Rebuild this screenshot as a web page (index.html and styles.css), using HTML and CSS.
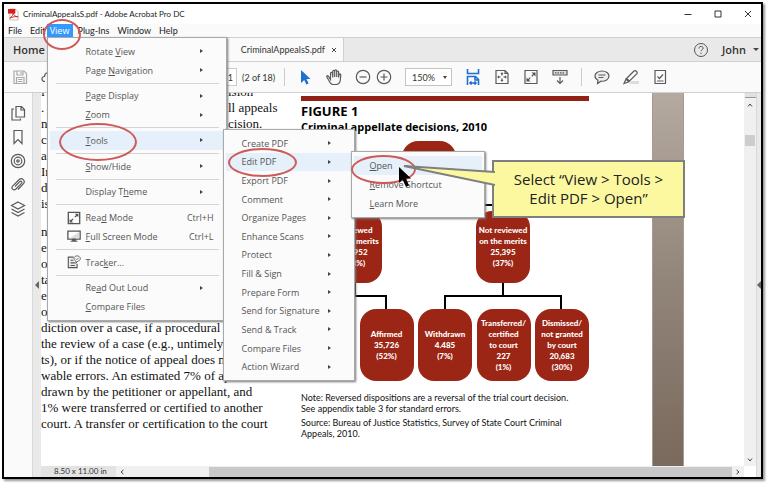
FILE: index.html
```html
<!DOCTYPE html>
<html lang="en">
<head>
  <meta charset="UTF-8">
  <meta name="viewport" content="width=device-width, initial-scale=1.0">
  <title>CriminalAppealsS.pdf - Adobe Acrobat Pro DC</title>
  <link rel="stylesheet" href="styles.css">
</head>
<body>

  <div class="app">

    <header class="title-bar">
      <svg class="app-icon" viewBox="0 0 12 14"><path d="M2 1h6l3 3v9H2z" fill="#fff" stroke="#bbb"/><path d="M0 1h8v5H0z" fill="#d8201a"/><path d="M2 11c2-1 4-4 3.500-6.500C6 8 8 9.500 11 9.500 8 9 5 9.500 2 11z" fill="none" stroke="#d8201a"/></svg>
      <span class="app-title">CriminalAppealsS.pdf - Adobe Acrobat Pro DC</span>
      <div class="window-buttons">
        <button aria-label="Minimize"><svg viewBox="0 0 8 8"><path d="M0.500 4.500h7"/></svg></button>
        <button aria-label="Maximize"><svg viewBox="0 0 8 8"><path d="M1 1h6v6H1z"/></svg></button>
        <button aria-label="Close"><svg viewBox="0 0 8 8"><path d="M1 1l6 6M7 1L1 7"/></svg></button>
      </div>
    </header>

    <nav class="menu-bar">
      <button>File</button>
      <button>Edit</button>
      <div class="menu-item open ring ring-view">
        <button>View</button>

        <!-- View menu -->
        <ul class="menu menu-view">
          <li class="row arrow"><button>Rotate <u>V</u>iew</button></li>
          <li class="row arrow"><button>Page <u>N</u>avigation</button></li>
          <li class="line"></li>
          <li class="row arrow"><button><u>P</u>age Display</button></li>
          <li class="row arrow"><button><u>Z</u>oom</button></li>
          <li class="line"></li>
          <li class="row arrow active ring ring-tools"><button><u>T</u>ools</button>

            <!-- Tools submenu -->
            <ul class="menu menu-tools">
              <li class="row arrow"><button>Create PDF</button></li>
              <li class="row arrow active ring ring-edit"><button>Edit PDF</button>

                <!-- Edit PDF submenu -->
                <ul class="menu menu-edit">
                  <li class="row active ring ring-open"><button><u>O</u>pen</button></li>
                  <li class="row"><button><u>R</u>emove Shortcut</button></li>
                  <li class="row"><button><u>L</u>earn More</button></li>
                </ul>
              </li>
              <li class="row arrow"><button>Export PDF</button></li>
              <li class="row arrow"><button>Comment</button></li>
              <li class="row arrow"><button>Organize Pages</button></li>
              <li class="row arrow"><button>Enhance Scans</button></li>
              <li class="row arrow"><button>Protect</button></li>
              <li class="row arrow"><button>Fill &amp; Sign</button></li>
              <li class="row arrow"><button>Prepare Form</button></li>
              <li class="row arrow"><button>Send for Signature</button></li>
              <li class="row arrow"><button>Send &amp; Track</button></li>
              <li class="row arrow"><button>Compare Files</button></li>
              <li class="row arrow"><button>Action Wizard</button></li>
            </ul>
          </li>
          <li class="line"></li>
          <li class="row arrow"><button><u>S</u>how/Hide</button></li>
          <li class="line"></li>
          <li class="row arrow"><button>Display T<u>h</u>eme</button></li>
          <li class="line"></li>
          <li class="row">
            <svg class="row-icon" viewBox="0 0 16 16"><path d="M1.500 1.500h13v13h-13z" fill="none" stroke="#555" stroke-width="1.500"/><path d="M9 3h4v4zM3 9v4h4z" fill="#555"/><path d="M11.500 4.500L9 7M4.500 11.500L7 9" stroke="#555" stroke-width="1.500"/></svg>
            <button>Rea<u>d</u> Mode <kbd>Ctrl+H</kbd></button>
          </li>
          <li class="row">
            <svg class="row-icon" viewBox="0 0 16 16"><path d="M1 2.500h14v9H1z" fill="#fff" stroke="#555" stroke-width="1.500"/><path d="M14 3.500v7H3z" fill="#ddd"/><path d="M6 11.500h4v2H6zM4 14h8" fill="#555" stroke="#555"/></svg>
            <button><u>F</u>ull Screen Mode <kbd>Ctrl+L</kbd></button>
          </li>
          <li class="line"></li>
          <li class="row">
            <svg class="row-icon" viewBox="0 0 16 16"><path d="M7.500 2.500H1.500v12h10V10" fill="#eee" stroke="#555" stroke-width="1.300"/><path d="M4 6h3M4 9h5M4 12h5" stroke="#555" stroke-width="1.300"/><path d="M11.500 1C9.500 1 8 2.300 8 4s1.200 2.600 2.500 3L10 9.500 12.300 7C14 6.800 15.300 5.500 15.300 4S13.500 1 11.500 1z" fill="#fff" stroke="#555"/><path d="M10 4l1.300 1.300L13.500 3" fill="none" stroke="#555"/></svg>
            <button>Trac<u>k</u>er...</button>
          </li>
          <li class="line"></li>
          <li class="row arrow"><button>Re<u>a</u>d Out Loud</button></li>
          <li class="row"><button><u>C</u>ompare Files</button></li>
        </ul>
      </div>
      <button>Plug-Ins</button>
      <button>Window</button>
      <button>Help</button>
    </nav>

    <div class="tab-bar">
      <button class="tab-home">Home</button>
      <div class="tab-file">
        <span>CriminalAppealsS.pdf</span>
        <button aria-label="Close tab"><svg viewBox="0 0 6 6"><path d="M1 1l4 4M5 1L1 5"/></svg></button>
      </div>
      <div class="account">
        <svg class="help" viewBox="0 0 16 16"><circle cx="8" cy="8" r="6.500"/><path d="M6 6.500c0-3 4.200-2.600 4.200-.3C10.200 7.600 8 7.600 8 9.300M8 10.700v1.300"/></svg>
        <button>John</button>
      </div>
    </div>

    <div class="toolbar">
      <svg class="icon faded" viewBox="0 0 16 16"><path d="M2 2h10l2.500 2.500V14.500H2z"/><path d="M5 2v4h6V2M4.500 14.500v-6h7.500v6M6 10.500h4.500M6 12.500h4.500M9 3v2"/></svg>
      <svg class="icon cloud" viewBox="0 0 16 16"><path d="M4 12.500C0 12.500 0 7.500 3.500 7.500 3.500 3.500 9 2 11 6"/></svg>
      <label class="pages"><input type="text" value="1" aria-label="Page"> (2 of 18)</label>
      <span class="divider"></span>
      <svg class="icon" viewBox="0 0 16 16"><path d="M4 1v13l3.200-3 2.200 4.500 2.200-1L9.500 10H13.500z" fill="#1f6fd0" stroke="none"/></svg>
      <svg class="icon" viewBox="0 0 16 16"><path d="M4.500 10.500L2.500 7.500C1.500 6 .2 7 1 8.300l3 5.200c.6 1.200 1.500 2 3.500 2h2c3 0 4.500-1.500 4.800-4.500l.5-5c0-1.400-1.700-1.400-1.800 0L12.600 8.500V3c0-1.300-1.900-1.300-1.900 0v5V2c0-1.400-2-1.400-2 0v6V2.500c0-1.400-1.900-1.400-1.900 0v6L6.400 4.200c-.1-1.300-1.900-1.200-1.900.2z"/></svg>
      <span class="zoom-pair">
        <svg class="icon" viewBox="0 0 16 16"><circle cx="8" cy="8" r="6.700"/><path d="M4.500 8h7"/></svg>
        <svg class="icon" viewBox="0 0 16 16"><circle cx="8" cy="8" r="6.700"/><path d="M4.500 8h7M8 4.500v7"/></svg>
      </span>
      <span class="zoom-box">
        <select aria-label="Zoom level"><option>150%</option></select>
      </span>
      <svg class="icon blue" viewBox="0 0 16 16"><path d="M2.500 0v4.500h11V0M2.500 16V7.500h8l3 3V16M10 7.500V11h3.500M5 14h6M6.500 12.500L5 14l1.500 1.500M9.500 12.500L11 14l-1.500 1.500"/></svg>
      <svg class="icon" viewBox="0 0 16 16"><path d="M2 1.500h9l3 3v10H2zM11 1.500v3h3"/><path d="M8 4v2.500M8 9.500V12M4 8h2.500M9.500 8H12M7 5l1-1 1 1M7 11l1 1 1-1M5 7L4 8l1 1M11 7l1 1-1 1"/></svg>
      <svg class="icon" viewBox="0 0 16 16"><path d="M2 1.500h12v13H2z"/><path d="M8.500 3.500h4v4zM3.500 8.500v4h4z" fill="#555" stroke="none"/><path d="M11 5L8.700 7.300M5 11l2.300-2.300"/></svg>
      <svg class="icon" viewBox="0 0 16 16"><path d="M1 1.500h14v4.500H1z" fill="#ddd"/><path d="M3 3.800h10" stroke-dasharray="1.500 1"/><path d="M8 8v6.500M5 11.500l3 3 3-3"/></svg>
      <span class="divider"></span>
      <svg class="icon" viewBox="0 0 16 16"><path d="M8 2C4 2 1 4.200 1 7c0 1.800 1.200 3.300 3 4.200L3.500 14.500 7 12.200c4.500.3 8-2 8-5.200C15 4.200 12 2 8 2z" fill="#eee"/><path d="M4.500 6h7M4.500 8.500h5"/></svg>
      <svg class="icon" viewBox="0 0 16 16"><path d="M8 12h8v3H6z" fill="#ddd" stroke="none"/><path d="M1 14.500l2-4.500 2.800 2.800zM3.500 9.500L11 2c1.200-1.300 4.200 1 2.700 2.800L6.500 12z"/></svg>
      <svg class="icon" viewBox="0 0 16 16"><path d="M3 1.500h10.500v13H3z"/><path d="M5.500 7.500l2 2L11 5.500M5 12h6.500"/></svg>
    </div>

    <div class="workspace">
      <aside class="rail">
        <svg class="icon" viewBox="0 0 16 16"><path d="M6 4V1.500h5.500L14.500 4.500V12H6V4M11 1.500V5h3.500"/><path d="M4 4H2v11h8.500v-1.500"/></svg>
        <svg class="icon" viewBox="0 0 16 16"><path d="M4 1.500h8v13l-4-4-4 4z"/></svg>
        <svg class="icon" viewBox="0 0 16 16"><circle cx="8" cy="8" r="6.700"/><circle cx="8" cy="8" r="3.800"/><circle cx="8" cy="8" r="1.200"/></svg>
        <svg class="icon" viewBox="0 0 16 16"><path d="M5 9.500L9.800 4.700c1.300-1.200 3 .4 1.700 1.700L6 12c-2.500 2.200-5.500-.8-3.200-3.200L9 2.700c3-2.700 7 1 4.300 4.200L8 12.500"/></svg>
        <svg class="icon" viewBox="0 0 16 16"><path d="M8 1l6.500 3.500L8 8 1.500 4.500zM1.500 8L8 11.500 14.500 8M1.500 11.500L8 15l6.500-3.500"/></svg>
      </aside>
      <div class="gutter gutter-left"></div>

      <main class="viewer">
        <div class="page">
          <article class="body-text">
            <p>
              <span class="split"><span>f</span><span>ision</span></span>
              <span class="split"><span>.</span><span>ll appeals</span></span>
              <span class="split"><span>n</span><span>cision.</span></span>
              <span>c</span>
              <span>a</span>
              <span>In</span>
              <span>d,</span>
              <span>is</span>
            </p>
            <p>
              <span>n</span>
              <span>er</span>
              <span>or</span>
              <span>ta</span>
              <span>e</span>
              <span>of</span>
              <span>diction over a case, if a procedural</span>
              <span>the review of a case (e.g., untimely</span>
              <span>ts), or if the notice of appeal does n</span>
              <span>wable errors. An estimated 7% of ap</span>
              <span>drawn by the petitioner or appellant, and</span>
              <span>1% were transferred or certified to another</span>
              <span>court. A transfer or certification to the court</span>
            </p>
          </article>

          <section class="figure">
            <h2>FIGURE 1</h2>
            <h3>Criminal appellate decisions, 2010</h3>

            <div class="chart">
              <div class="level level-top"><div class="node node-top"></div></div>
              <svg class="links" viewBox="0 0 288 24"><path d="M128 0v18M54 24v-6h148v6"/></svg>
              <div class="level level-mid">
                <div class="node">Reviewed<br>on the merits<br>43,952<br>(63%)</div>
                <div class="node">Not reviewed<br>on the merits<br>25,395<br>(37%)</div>
              </div>
              <svg class="links" viewBox="0 0 288 26"><path d="M54 0v13M27 26V13h58v13M202 0v13M144 26V13h116v13"/></svg>
              <div class="level">
                <div class="node"></div>
                <div class="node">Affirmed<br>35,726<br>(52%)</div>
                <div class="node">Withdrawn<br>4.485<br>(7%)</div>
                <div class="node">Transferred/<br>certified<br>to court<br>227<br>(1%)</div>
                <div class="node">Dismissed/<br>not granted<br>by court<br>20,683<br>(30%)</div>
              </div>
            </div>

            <p>Note: Reversed dispositions are a reversal of the trial court decision.<br>See appendix table 3 for standard errors.</p>
            <p>Source: Bureau of Justice Statistics, Survey of State Court Criminal<br>Appeals, 2010.</p>
          </section>

          <div class="page-edge"></div>
        </div>

        <div class="scroll-v">
          <span class="scroll-split"></span>
          <svg viewBox="0 0 6 6"><path d="M1 4.500l2-2.500 2 2.500"/></svg>
          <span class="thumb"></span>
          <svg class="last" viewBox="0 0 6 6"><path d="M1 1.500L3 4l2-2.500"/></svg>
        </div>

        <footer class="status">
          <span class="page-size">8.50 x 11.00 in</span>
          <svg viewBox="0 0 6 6"><path d="M4.500 1L2 3l2.500 2"/></svg>
          <span class="thumb"></span>
          <svg viewBox="0 0 6 6"><path d="M1.500 1L4 3 1.500 5"/></svg>
        </footer>
      </main>

      <div class="gutter gutter-right"></div>
    </div>

    <div class="callout">
      <svg class="callout-tip" viewBox="0 0 92 22"><path d="M92 7L1 1l91 19" fill="#fbf8a0" stroke="#7f7f7f" stroke-width="2"/></svg>
      <svg class="cursor" viewBox="0 0 12 20"><path d="M0 0v16l3.500-3.500L7 20l3-1.500L7 11.500h5z"/></svg>
      Select “View &gt; Tools &gt;<br>Edit PDF &gt; Open”
    </div>

  </div>

</body>
</html>
```
FILE: styles.css
```css
* {
  box-sizing: border-box;
}

body {
  margin: 0;
  padding: 2px 5px 4px 2px;
  height: 100vh;
  background: #fff;
  font-family: "Open Sans", "Noto Sans", sans-serif;
  font-size: 9px;
  color: #333;
}

button {
  padding: 0;
  border: 0;
  background: none;
  font: inherit;
  color: inherit;
  text-align: left;
}

ul {
  margin: 0;
  padding: 0;
  list-style: none;
}

.app {
  position: relative;
  display: flex;
  flex-direction: column;
  height: 100%;
  border: 2px solid #000;
  background: #fafafa;
  box-shadow: 2px 2px 2px #999;
}

/* title bar */
.title-bar {
  display: flex;
  align-items: center;
  height: 20px;
  padding: 0 9px 0 4px;
  background: #fff;
}

.app-icon {
  width: 11px;
  height: 13px;
  margin-right: 4px;
}

.app-title,
.menu-bar > button {
  font-family: Lato, sans-serif;
  color: #222;
}

.app-title {
  font-size: 8px;
}

.window-buttons {
  display: flex;
  gap: 22px;
  margin-left: auto;
}

.window-buttons svg {
  display: block;
  width: 8px;
  height: 8px;
  fill: none;
  stroke: #333;
}

/* menus */
.menu-bar {
  display: flex;
  height: 13px;
  padding-left: 4px;
}

.menu-bar > button {
  margin-right: 8px;
  line-height: 13px;
}

.menu-bar > button:nth-of-type(2) {
  margin-right: 1px;
}

.menu-item {
  position: relative;
  width: 26px;
  margin-right: 5px;
}

.menu-item > button {
  width: 26px;
  line-height: 13px;
  text-align: center;
  background: #3399ff;
  color: #fff;
}

.menu {
  position: absolute;
  z-index: 5;
  display: flex;
  flex-direction: column;
  padding: 4px 2px;
  border: 1px solid #a9a9a9;
  background: #fbfbfb;
  box-shadow: 1px 1px 2px #777;
  color: #555;
}

.menu-view {
  top: 13px;
  left: 0;
  width: 180px;
  height: 284px;
}

.menu-tools {
  top: -2px;
  left: 173px;
  width: 132px;
  height: 252px;
}

.menu-edit {
  top: -2px;
  left: 125px;
  width: 134px;
  height: 67px;
}

.row {
  position: relative;
  display: flex;
  flex: 1;
  align-items: center;
}

.row > button {
  display: flex;
  flex: 1;
  white-space: pre;
  padding: 0 10px 0 36px;
}

.menu-tools .row > button,
.menu-edit .row > button {
  padding-left: 16px;
}

.row kbd {
  margin-left: auto;
  font: inherit;
}

.row.active {
  background: #e5f0fa;
}

.arrow::before {
  content: "";
  position: absolute;
  right: 21px;
  border: 2px solid transparent;
  border-left: 3px solid #444;
  border-right: 0;
}

.row-icon {
  position: absolute;
  left: 17px;
  width: 14px;
  height: 14px;
}

.line {
  height: 7px;
  margin: 0 5px 0 6px;
  background: linear-gradient(#d4d4d4, #d4d4d4) center / 100% 1px no-repeat;
}

/* red rings round the steps */
.ring::after {
  content: "";
  position: absolute;
  z-index: 6;
  border: 2px solid #cf5a5a;
  border-radius: 50%;
  pointer-events: none;
}

.ring-view::after {
  top: -5px;
  left: -4px;
  width: 34px;
  height: 27px;
}

.ring-tools::after {
  top: -8px;
  left: 9px;
  width: 74px;
  height: 34px;
}

.ring-edit::after {
  top: -5px;
  left: 2px;
  width: 65px;
  height: 25px;
}

.ring-open::after {
  top: -1px;
  left: -3px;
  width: 61px;
  height: 25px;
}

/* tabs */
.tab-bar {
  display: flex;
  align-items: center;
  height: 25px;
  border-top: 1px solid #d0d0d0;
  border-bottom: 1px solid #d0d0d0;
  background: #e9e9e9;
}

.tab-home {
  width: 190px;
  padding-left: 9px;
  font-size: 11px;
  font-weight: 600;
}

.tab-file {
  display: flex;
  align-items: center;
  align-self: stretch;
  justify-content: flex-end;
  gap: 6px;
  width: 150px;
  padding-right: 6px;
  border-right: 1px solid #d0d0d0;
  background: #fafafa;
  font-family: Lato, sans-serif;
}

.tab-file svg {
  display: block;
  width: 6px;
  height: 6px;
  stroke: #444;
}

.account {
  display: flex;
  align-items: center;
  gap: 13px;
  margin-left: auto;
  padding-right: 2px;
  font-size: 11px;
  font-weight: 600;
}

.account button {
  display: flex;
  align-items: center;
  gap: 7px;
}

.account button::after {
  content: "";
  border: 3px solid transparent;
  border-top-color: #444;
  border-bottom: 0;
}

.help {
  width: 16px;
  height: 16px;
  fill: none;
  stroke: #555;
}

/* toolbar */
.toolbar {
  display: flex;
  align-items: center;
  gap: 13px;
  height: 31px;
  padding-left: 8px;
  border-bottom: 1px solid #cfcfcf;
}

.icon {
  flex: none;
  width: 16px;
  height: 16px;
  fill: none;
  stroke: #5a5a5a;
  stroke-width: 1.2;
}

.faded {
  stroke: #aaa;
}

.blue {
  stroke: #1f6fd0;
  stroke-width: 1.6;
}

.cloud {
  margin-right: 125px;
}

.pages {
  display: flex;
  align-items: center;
  gap: 5px;
  width: 66px;
  white-space: nowrap;
  margin-left: 10px;
  font-family: Lato, sans-serif;
}

.pages input {
  width: 32px;
  height: 18px;
  padding: 0 3px 0 0;
  border: 1px solid #ccc;
  background: #fff;
  font: inherit;
  color: inherit;
  text-align: right;
}

.divider {
  width: 1px;
  height: 18px;
  margin-right: -1px;
  background: #ccc;
}

.zoom-pair {
  display: flex;
  gap: 5px;
}

.zoom-box {
  position: relative;
}

.zoom-box select {
  display: block;
  width: 47px;
  height: 18px;
  padding: 0 6px;
  border: 1px solid #c4c4c4;
  border-radius: 0;
  appearance: none;
  background: #fff;
  font: inherit;
  font-family: Lato, sans-serif;
  color: inherit;
}

.zoom-box::after {
  content: "";
  position: absolute;
  top: 8px;
  right: 5px;
  border: 2px solid transparent;
  border-top: 3px solid #444;
  border-bottom: 0;
}

/* workspace */
.workspace {
  display: flex;
  flex: 1;
  min-height: 0;
}

.rail {
  display: flex;
  flex-direction: column;
  align-items: center;
  gap: 8px;
  width: 28px;
  padding-top: 12px;
}

.gutter {
  display: flex;
  align-items: center;
  justify-content: flex-end;
  background: #e9e9e9;
  border-left: 1px solid #d8d8d8;
}

.gutter::before {
  content: "";
  border: 4px solid transparent;
  border-right-color: #666;
  border-left: 0;
}

.gutter-left {
  width: 9px;
  padding-right: 2px;
}

.gutter-right {
  width: 5px;
}

.viewer {
  display: grid;
  flex: 1;
  grid-template-columns: 1fr 12px;
  grid-template-rows: 1fr 11px;
  min-width: 0;
  background: #fff;
}

.page {
  display: flex;
  min-width: 0;
  min-height: 0;
  overflow: hidden;
  background: #fff;
}

.body-text {
  flex: none;
  width: 260px;
  margin-top: -9px;
  font-family: "Liberation Serif", serif;
  font-size: 13px;
  line-height: 16px;
  color: #111;
  white-space: nowrap;
}

.body-text p {
  margin: 0 0 12px;
}

.body-text p > span {
  display: block;
}

.body-text .split {
  display: flex;
}

.split span:first-child {
  width: 187px;
}

.figure {
  flex: none;
  width: 288px;
  padding-top: 3px;
  color: #111;
}

.figure h2,
.figure h3 {
  margin: 0;
  line-height: 16px;
  color: #000;
  white-space: nowrap;
}

.figure h2 {
  padding-top: 2px;
  border-top: 5px solid #932014;
  font-size: 13px;
}

.figure h3 {
  font-size: 11px;
}

.figure p {
  margin: 0 0 3px;
  font-family: Lato, sans-serif;
  font-size: 9px;
  line-height: 11px;
  white-space: nowrap;
}

.chart {
  padding: 6px 0 11px;
}

.level {
  display: flex;
  justify-content: space-between;
}

.level-top {
  padding-left: 101px;
}

.level-mid {
  justify-content: flex-start;
  gap: 94px;
  padding-left: 27px;
}

.node {
  display: flex;
  align-items: center;
  justify-content: center;
  width: 54px;
  height: 72px;
  border-radius: 16px;
  background: #9c2615;
  font-family: Lato, sans-serif;
  font-size: 8px;
  font-weight: 900;
  line-height: 11px;
  text-align: center;
  white-space: nowrap;
  color: #fff;
}

.node-top {
  height: 46px;
}

.links {
  display: block;
  width: 288px;
  fill: none;
  stroke: #000;
  stroke-width: 2;
}

.page-edge {
  width: 32px;
  margin-left: 63px;
  border: solid #a89a8f;
  border-width: 0 1px;
  background: linear-gradient(#b5aaa0, #92857a 50%, #7a695d);
}

/* scroll bars */
.scroll-v {
  display: flex;
  flex-direction: column;
  align-items: center;
  background: #f0f0f0;
}

.scroll-v svg,
.status svg {
  flex: none;
  width: 6px;
  height: 6px;
  fill: none;
  stroke: #444;
}

.scroll-split {
  width: 11px;
  height: 5px;
  margin-bottom: 4px;
  border-bottom: 1px solid #999;
  background: #e0e0e0;
}

.scroll-v .thumb {
  width: 10px;
  height: 11px;
  margin-top: 27px;
  background: #cdcdcd;
}

.scroll-v .last {
  margin-top: auto;
  margin-bottom: 3px;
}

.status {
  display: flex;
  align-items: center;
  background: #f0f0f0;
  padding-right: 3px;
}

.page-size {
  width: 75px;
  margin-right: 3px;
  padding-left: 13px;
  background: #e3e3e3;
  font-family: Lato, sans-serif;
  font-size: 8px;
  line-height: 11px;
  white-space: nowrap;
}

.status .thumb {
  flex: 1;
  height: 10px;
  margin: 0 3px 0 84px;
  background: #c9c9c9;
}

/* callout */
.callout {
  position: absolute;
  z-index: 10;
  top: 156px;
  left: 488px;
  width: 193px;
  padding: 8px 0;
  border: 2px solid #7f7f7f;
  background: #fbf8a0;
  font-size: 15px;
  line-height: 19px;
  text-align: center;
  color: #222;
}

.callout-tip {
  position: absolute;
  top: 3px;
  right: 188px;
  width: 92px;
  height: 22px;
}

.cursor {
  position: absolute;
  top: 5px;
  right: 272px;
  width: 12px;
  height: 20px;
}
```
